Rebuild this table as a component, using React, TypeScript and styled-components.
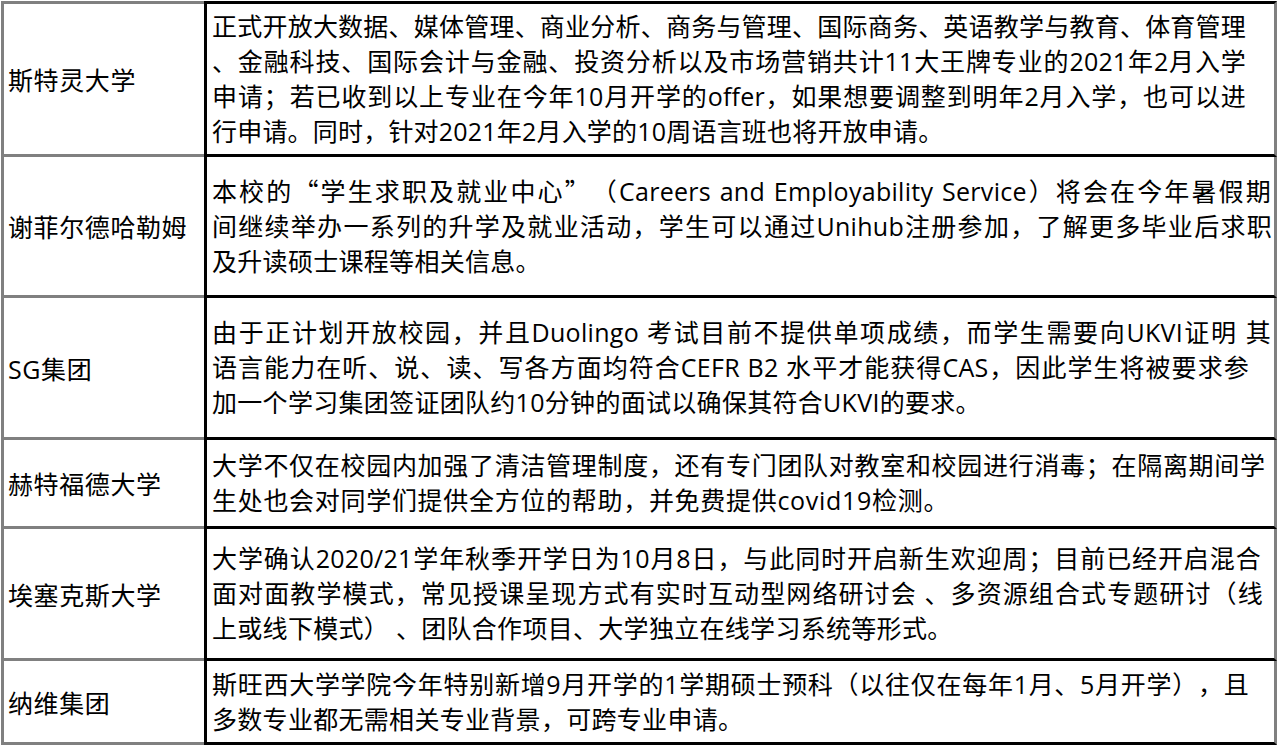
import React from 'react';
import styled, { createGlobalStyle } from 'styled-components';

const GlobalStyle = createGlobalStyle`
  html, body {
    margin: 0;
    padding: 0;
    background: #ffffff;
  }
  body {
    font-family: "Open Sans", "Noto Sans CJK SC", sans-serif;
    color: #000000;
    text-spacing-trim: space-all;
  }
`;

const Page = styled.div`
  padding: 1px 0 0 1px;
`;

const Table = styled.div`
  display: grid;
  grid-template-columns: 203px 1073px;
  width: 1276px;
`;

const NameCell = styled.div<{ $h: number; $first: boolean }>`
  box-sizing: content-box;
  height: ${(p) => p.$h}px;
  border-left: 3px solid #808080;
  border-bottom: 3px solid #808080;
  border-top: ${(p) => (p.$first ? '3px solid #808080' : 'none')};
  display: flex;
  align-items: center;
  padding-left: 4px;
  font-size: 25px;
  letter-spacing: 0.6px;
  white-space: nowrap;
`;

const TextCell = styled.div<{ $h: number; $first: boolean }>`
  box-sizing: content-box;
  height: ${(p) => p.$h}px;
  border-left: 3px solid #000000;
  border-bottom: 3px solid #000000;
  border-right: 3px solid #808080;
  border-top: ${(p) => (p.$first ? '3px solid #000000' : 'none')};
  display: flex;
  flex-direction: column;
  justify-content: center;
  align-items: flex-start;
  padding-left: 5px;
  overflow: hidden;
`;

const Line = styled.div<{ $ls: number; $w?: number }>`
  font-size: 25px;
  line-height: 35px;
  letter-spacing: ${(p) => p.$ls}px;
  white-space: nowrap;
  text-spacing-trim: space-all;
  ${(p) =>
    p.$w
      ? `width: ${p.$w}px; white-space: normal; text-align: justify; text-align-last: justify; overflow: visible;`
      : ''}
`;

const Quote = styled.span`
  font-family: "Noto Sans CJK SC", sans-serif;
  font-feature-settings: "fwid" 1;
`;

type LineData = { t: string; w?: number };
type Row = { name: string; h: number; ls: number; lines: LineData[] };

const rows: Row[] = [
  {
    name: '斯特灵大学',
    h: 150,
    ls: 0.2,
    lines: [
      { t: '正式开放大数据、媒体管理、商业分析、商务与管理、国际商务、英语教学与教育、体育管理', w: 1034 },
      { t: '、金融科技、国际会计与金融、投资分析以及市场营销共计11大王牌专业的2021年2月入学', w: 1034 },
      { t: '申请；若已收到以上专业在今年10月开学的offer，如果想要调整到明年2月入学，也可以进', w: 1034 },
      { t: '行申请。同时，针对2021年2月入学的10周语言班也将开放申请。' },
    ],
  },
  {
    name: '谢菲尔德哈勒姆',
    h: 138,
    ls: 0.3,
    lines: [
      { t: '本校的“学生求职及就业中心”（Careers and Employability Service）将会在今年暑假期', w: 1059 },
      { t: '间继续举办一系列的升学及就业活动，学生可以通过Unihub注册参加，了解更多毕业后求职', w: 1060 },
      { t: '及升读硕士课程等相关信息。' },
    ],
  },
  {
    name: 'SG集团',
    h: 139,
    ls: 0.3,
    lines: [
      { t: '由于正计划开放校园，并且Duolingo 考试目前不提供单项成绩，而学生需要向UKVI证明 其', w: 1059 },
      { t: '语言能力在听、说、读、写各方面均符合CEFR B2 水平才能获得CAS，因此学生将被要求参', w: 1037 },
      { t: '加一个学习集团签证团队约10分钟的面试以确保其符合UKVI的要求。' },
    ],
  },
  {
    name: '赫特福德大学',
    h: 86,
    ls: 0.7,
    lines: [
      { t: '大学不仅在校园内加强了清洁管理制度，还有专门团队对教室和校园进行消毒；在隔离期间学' },
      { t: '生处也会对同学们提供全方位的帮助，并免费提供covid19检测。' },
    ],
  },
  {
    name: '埃塞克斯大学',
    h: 129,
    ls: 0.3,
    lines: [
      { t: '大学确认2020/21学年秋季开学日为10月8日，与此同时开启新生欢迎周；目前已经开启混合', w: 1049 },
      { t: '面对面教学模式，常见授课呈现方式有实时互动型网络研讨会 、多资源组合式专题研讨（线', w: 1051 },
      { t: '上或线下模式） 、团队合作项目、大学独立在线学习系统等形式。' },
    ],
  },
  {
    name: '纳维集团',
    h: 81,
    ls: 0.3,
    lines: [
      { t: '斯旺西大学学院今年特别新增9月开学的1学期硕士预科（以往仅在每年1月、5月开学），且', w: 1037 },
      { t: '多数专业都无需相关专业背景，可跨专业申请。' },
    ],
  },
];

function renderLine(text: string) {
  return text.split(/([“”])/).map((part, k) =>
    part === '“' || part === '”' ? (
      <Quote key={k}>{part}</Quote>
    ) : (
      <React.Fragment key={k}>{part}</React.Fragment>
    )
  );
}

export default function App() {
  return (
    <>
      <GlobalStyle />
      <Page>
        <Table>
          {rows.map((r, i) => (
            <React.Fragment key={r.name}>
              <NameCell $h={r.h} $first={i === 0}>
                {r.name}
              </NameCell>
              <TextCell $h={r.h} $first={i === 0}>
                {r.lines.map((l, j) => (
                  <Line key={j} $ls={r.ls} $w={l.w}>
                    {renderLine(l.t)}
                  </Line>
                ))}
              </TextCell>
            </React.Fragment>
          ))}
        </Table>
      </Page>
    </>
  );
}
